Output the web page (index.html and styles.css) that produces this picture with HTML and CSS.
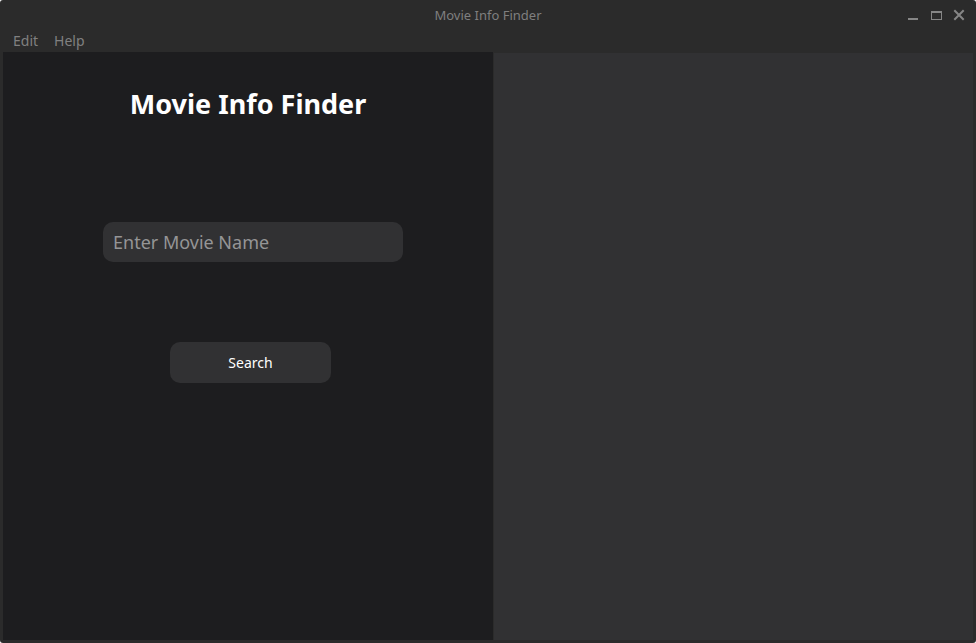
FILE: index.html
```
<!DOCTYPE html>
<html lang="en">
<head>
<meta charset="utf-8">
<title>Movie Info Finder</title>
<link rel="stylesheet" href="styles.css">
</head>
<body>
<div class="window">
  <header class="titlebar">
    <span class="window-title">Movie Info Finder</span>
    <div class="window-controls">
      <button class="control" type="button" aria-label="Minimize">
        <svg viewBox="0 0 12 12" width="12" height="12" shape-rendering="crispEdges"><path d="M1 9h10v2H1z" fill="currentColor"/></svg>
      </button>
      <button class="control" type="button" aria-label="Maximize">
        <svg viewBox="0 0 12 12" width="12" height="12" shape-rendering="crispEdges"><path fill-rule="evenodd" d="M1 2h11v9H1zM2 4v6h9V4z" fill="currentColor"/></svg>
      </button>
      <button class="control" type="button" aria-label="Close">
        <svg viewBox="0 0 12 12" width="12" height="12"><path d="M1.3 1.3l9.4 9.4M10.7 1.3l-9.4 9.4" stroke="currentColor" stroke-width="2" fill="none"/></svg>
      </button>
    </div>
  </header>
  <nav class="menubar">
    <button class="menu" type="button">Edit</button>
    <button class="menu" type="button">Help</button>
  </nav>
  <main class="content">
    <form class="search-panel">
      <h1 class="heading">Movie Info Finder</h1>
      <input class="movie-input" type="text" placeholder="Enter Movie Name" aria-label="Movie name">
      <button class="search-button" type="button">Search</button>
    </form>
    <section class="result-panel" aria-label="Results"></section>
  </main>
</div>
</body>
</html>
```
FILE: styles.css
```
* {
  box-sizing: border-box;
}

body {
  margin: 0;
  background: #ffffff;
  font-family: "Noto Sans", "Open Sans", sans-serif;
}

button,
input {
  margin: 0;
  border: 0;
  font-family: inherit;
}

.window {
  display: flex;
  flex-direction: column;
  min-height: 100vh;
  padding: 0 3px 3px;
  border-radius: 3px;
  background: #2b2b2b;
}

.titlebar {
  display: grid;
  grid-template-columns: 1fr auto 1fr;
  align-items: center;
  height: 30px;
}

.window-title {
  grid-column: 2;
  color: #7f7f7f;
  font-size: 13px;
  line-height: 20px;
}

.window-controls {
  display: flex;
  justify-self: end;
  gap: 11px;
  padding-right: 8px;
}

.control {
  display: block;
  width: 12px;
  height: 12px;
  padding: 0;
  background: none;
  color: #868686;
}

.control svg {
  display: block;
}

.menubar {
  display: flex;
  gap: 16px;
  height: 22px;
  padding: 0 10px;
}

.menu {
  padding: 0;
  background: none;
  color: #808080;
  font-size: 14px;
  line-height: 22px;
}

.content {
  display: grid;
  flex: 1;
  grid-template-columns: 490px 1fr;
  gap: 1px;
}

.search-panel {
  display: flex;
  flex-direction: column;
  align-items: center;
  padding: 32px 0;
  background: #1d1d1f;
}

.heading {
  margin: 0 0 98px;
  color: #ffffff;
  font-size: 27px;
  font-weight: 700;
  line-height: 40px;
}

.movie-input {
  width: 300px;
  height: 40px;
  margin-left: 10px;
  padding: 0 10px;
  border-radius: 10px;
  background: #313133;
  color: #ffffff;
  font-size: 18px;
}

.movie-input::placeholder {
  color: #959596;
  opacity: 1;
}

.search-button {
  width: 161px;
  height: 41px;
  margin: 80px 0 0 5px;
  padding: 0;
  border-radius: 10px;
  background: #313133;
  color: #ffffff;
  font-size: 14px;
}

.result-panel {
  margin-top: 1px;
  background: #313133;
}
```
